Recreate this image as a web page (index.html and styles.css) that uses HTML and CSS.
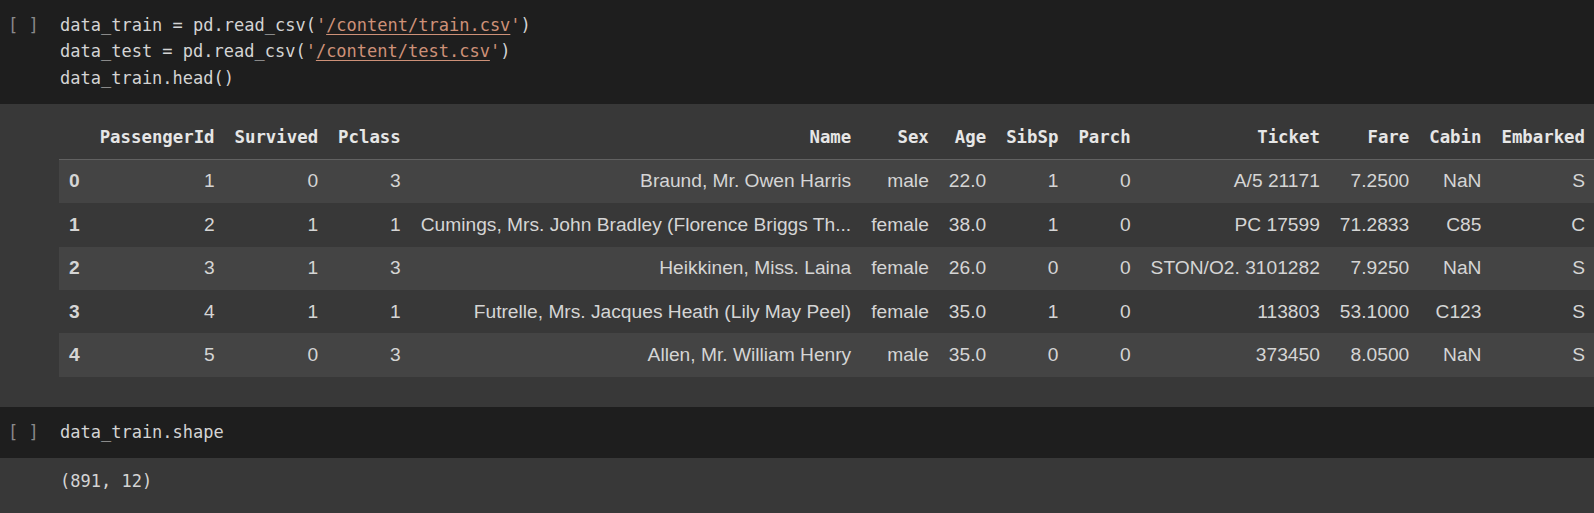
FILE: index.html
```html
<!DOCTYPE html>
<html lang="en">
<head>
<meta charset="utf-8">
<title>Notebook</title>
<link rel="stylesheet" href="styles.css">
</head>
<body>
<div class="notebook">
  <div class="cell code-cell three-lines">
    <div class="gutter">[ ]</div>
    <pre class="source">data_train = pd.read_csv(<span class="str">'</span><span class="str link">/content/train.csv</span><span class="str">'</span>)
data_test = pd.read_csv(<span class="str">'</span><span class="str link">/content/test.csv</span><span class="str">'</span>)
data_train.head()</pre>
  </div>
  <div class="output table-output">
    <table class="dataframe">
      <thead>
        <tr>
          <th></th><th>PassengerId</th><th>Survived</th><th>Pclass</th><th>Name</th><th>Sex</th><th>Age</th><th>SibSp</th><th>Parch</th><th>Ticket</th><th>Fare</th><th>Cabin</th><th>Embarked</th>
        </tr>
      </thead>
      <tbody>
        <tr>
          <th>0</th><td>1</td><td>0</td><td>3</td><td>Braund, Mr. Owen Harris</td><td>male</td><td>22.0</td><td>1</td><td>0</td><td>A/5 21171</td><td>7.2500</td><td>NaN</td><td>S</td>
        </tr>
        <tr>
          <th>1</th><td>2</td><td>1</td><td>1</td><td>Cumings, Mrs. John Bradley (Florence Briggs Th...</td><td>female</td><td>38.0</td><td>1</td><td>0</td><td>PC 17599</td><td>71.2833</td><td>C85</td><td>C</td>
        </tr>
        <tr>
          <th>2</th><td>3</td><td>1</td><td>3</td><td>Heikkinen, Miss. Laina</td><td>female</td><td>26.0</td><td>0</td><td>0</td><td>STON/O2. 3101282</td><td>7.9250</td><td>NaN</td><td>S</td>
        </tr>
        <tr>
          <th>3</th><td>4</td><td>1</td><td>1</td><td>Futrelle, Mrs. Jacques Heath (Lily May Peel)</td><td>female</td><td>35.0</td><td>1</td><td>0</td><td>113803</td><td>53.1000</td><td>C123</td><td>S</td>
        </tr>
        <tr>
          <th>4</th><td>5</td><td>0</td><td>3</td><td>Allen, Mr. William Henry</td><td>male</td><td>35.0</td><td>0</td><td>0</td><td>373450</td><td>8.0500</td><td>NaN</td><td>S</td>
        </tr>
      </tbody>
    </table>
  </div>
  <div class="cell code-cell one-line">
    <div class="gutter">[ ]</div>
    <pre class="source">data_train.shape</pre>
  </div>
  <div class="output text-output">
    <pre class="result">(891, 12)</pre>
  </div>
</div>
</body>
</html>
```

FILE: styles.css
```css
html, body {
  margin: 0;
  padding: 0;
  background: #383838;
}

.notebook {
  display: flex;
  flex-direction: column;
  width: 100%;
  overflow: hidden;
}

.code-cell {
  display: flex;
  align-items: flex-start;
  background: #1e1e1e;
  padding: 12px 0 13px 0;
}

.gutter {
  width: 60px;
  flex: 0 0 60px;
  box-sizing: border-box;
  padding-left: 8px;
  font-family: "DejaVu Sans Mono", "Liberation Mono", monospace;
  font-size: 17px;
  line-height: 26.3px;
  color: #8a8a8a;
  white-space: pre;
}

.source,
.result {
  margin: 0;
  font-family: "DejaVu Sans Mono", "Liberation Mono", monospace;
  font-size: 17px;
  line-height: 26.3px;
  color: #d4d4d4;
  white-space: pre;
}

.str {
  color: #ce9178;
}

.link {
  text-decoration: underline;
  text-decoration-thickness: 1px;
  text-underline-offset: 3px;
}

.output {
  background: #383838;
}

.table-output {
  padding: 11.5px 0 30px 59px;
  overflow: hidden;
}

.text-output {
  padding: 10px 0 18px 60px;
}

.dataframe {
  border-collapse: collapse;
  white-space: nowrap;
  font-family: "Liberation Sans", Arial, sans-serif;
  font-size: 19.2px;
  color: #d5d5d5;
}

.dataframe th,
.dataframe td {
  padding: 10.5px 10px;
  line-height: 22.4px;
  text-align: right;
  vertical-align: middle;
}

.dataframe thead th {
  font-family: "DejaVu Sans Mono", "Liberation Mono", monospace;
  font-size: 17.35px;
  font-weight: bold;
  color: #e6e6e6;
  border-bottom: 1px solid #616161;
}

.dataframe tbody th {
  text-align: left;
  font-weight: bold;
}

.dataframe tbody tr:nth-child(odd) {
  background: #444444;
}
```
